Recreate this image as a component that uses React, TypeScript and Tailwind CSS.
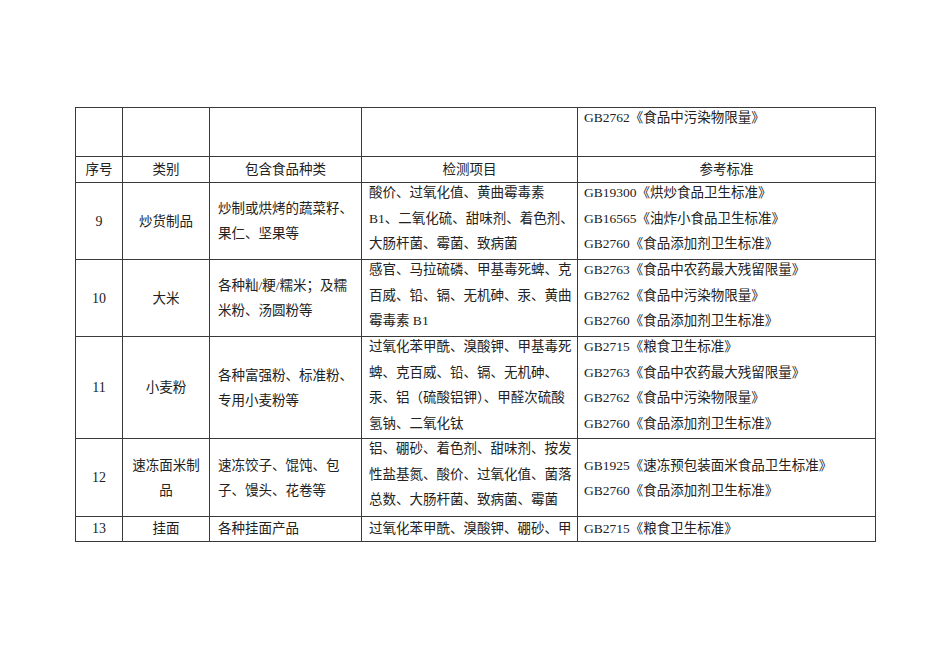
type Row = {
  no: string;
  cat: string[];
  foods: string[];
  items: string[];
  stds: string[];
  h: string;
  stdsCenter?: boolean;
};

const rows: Row[] = [
  {
    no: '9',
    cat: ['炒货制品'],
    foods: ['炒制或烘烤的蔬菜籽、', '果仁、坚果等'],
    items: ['酸价、过氧化值、黄曲霉毒素', 'B1、二氧化硫、甜味剂、着色剂、', '大肠杆菌、霉菌、致病菌'],
    stds: ['GB19300《烘炒食品卫生标准》', 'GB16565《油炸小食品卫生标准》', 'GB2760《食品添加剂卫生标准》'],
    h: 'h-[77px]',
  },
  {
    no: '10',
    cat: ['大米'],
    foods: ['各种籼/粳/糯米；及糯', '米粉、汤圆粉等'],
    items: ['感官、马拉硫磷、甲基毒死蜱、克', '百威、铅、镉、无机砷、汞、黄曲', '霉毒素 B1'],
    stds: ['GB2763《食品中农药最大残留限量》', 'GB2762《食品中污染物限量》', 'GB2760《食品添加剂卫生标准》'],
    h: 'h-[77px]',
  },
  {
    no: '11',
    cat: ['小麦粉'],
    foods: ['各种富强粉、标准粉、', '专用小麦粉等'],
    items: ['过氧化苯甲酰、溴酸钾、甲基毒死', '蜱、克百威、铅、镉、无机砷、', '汞、铝（硫酸铝钾）、甲醛次硫酸', '氢钠、二氧化钛'],
    stds: ['GB2715《粮食卫生标准》', 'GB2763《食品中农药最大残留限量》', 'GB2762《食品中污染物限量》', 'GB2760《食品添加剂卫生标准》'],
    h: 'h-[102px]',
  },
  {
    no: '12',
    cat: ['速冻面米制', '品'],
    foods: ['速冻饺子、馄饨、包', '子、馒头、花卷等'],
    items: ['铝、硼砂、着色剂、甜味剂、按发', '性盐基氮、酸价、过氧化值、菌落', '总数、大肠杆菌、致病菌、霉菌'],
    stds: ['GB1925《速冻预包装面米食品卫生标准》', 'GB2760《食品添加剂卫生标准》'],
    h: 'h-[78px]',
    stdsCenter: true,
  },
];

const td = 'border border-[#3a3a3a] p-0';

const Lines = ({ lines, top }: { lines: string[]; top?: boolean }) => (
  <div className={top ? '-mt-[3px] leading-[25.5px]' : 'leading-[25px]'}>
    {lines.map((l, i) => (
      <div key={i} className="whitespace-nowrap">
        {l}
      </div>
    ))}
  </div>
);

export default function App() {
  return (
    <div className="min-h-[672px] w-[950px] bg-white pl-[75px] pt-[107px] font-['Liberation_Serif','Noto_Sans_CJK_SC',serif] text-[13.5px] text-[#222]">
      <table className="w-[800px] table-fixed border-collapse">
        <colgroup>
          <col className="w-[47px]" />
          <col className="w-[87px]" />
          <col className="w-[152px]" />
          <col className="w-[216px]" />
          <col className="w-[298px]" />
        </colgroup>
        <tbody>
          <tr className="h-[49px]">
            <td className={td}></td>
            <td className={td}></td>
            <td className={td}></td>
            <td className={td}></td>
            <td className={`${td} px-[6px] align-top`}>
              <Lines lines={['GB2762《食品中污染物限量》']} top />
            </td>
          </tr>
          <tr className="h-[26px] text-center leading-[25px]">
            <td className={td}>序号</td>
            <td className={td}>类别</td>
            <td className={td}>包含食品种类</td>
            <td className={td}>检测项目</td>
            <td className={td}>参考标准</td>
          </tr>
          {rows.map((r) => (
            <tr key={r.no} className={r.h}>
              <td className={`${td} text-center align-middle text-[14px]`}>{r.no}</td>
              <td className={`${td} text-center align-middle`}>
                <Lines lines={r.cat} />
              </td>
              <td className={`${td} pl-[8px] align-middle`}>
                <Lines lines={r.foods} />
              </td>
              <td className={`${td} pl-[7px] align-top`}>
                <Lines lines={r.items} top />
              </td>
              <td className={`${td} pl-[6px] ${r.stdsCenter ? 'align-middle' : 'align-top'}`}>
                <Lines lines={r.stds} top={!r.stdsCenter} />
              </td>
            </tr>
          ))}
          <tr className="h-[25px] leading-[24px]">
            <td className={`${td} text-center text-[14px]`}>13</td>
            <td className={`${td} text-center`}>挂面</td>
            <td className={`${td} pl-[8px]`}>各种挂面产品</td>
            <td className={`${td} whitespace-nowrap pl-[7px]`}>过氧化苯甲酰、溴酸钾、硼砂、甲</td>
            <td className={`${td} pl-[6px]`}>GB2715《粮食卫生标准》</td>
          </tr>
        </tbody>
      </table>
    </div>
  );
}
